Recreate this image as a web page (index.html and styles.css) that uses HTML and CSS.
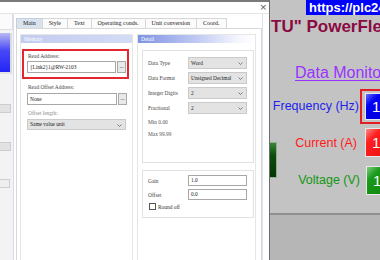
FILE: index.html
```html
<!DOCTYPE html>
<html lang="en">
<head>
  <meta charset="UTF-8">
  <title>Numeric Display Properties</title>
  <link rel="stylesheet" href="styles.css">
</head>
<body>
  <div class="screen">
    <div class="dialog">
      <div class="titlebar"><span class="close">×</span></div>
      <div class="dialog-body">
        <div class="side">
          <div class="side-top"></div>
          <div class="side-preview"></div>
          <div class="side-select"></div>
          <div class="side-select second"></div>
          <div class="side-btn"></div>
        </div>

        <div class="main">
          <div class="tabs">
            <div class="tab active">Main</div>
            <div class="tab">Style</div>
            <div class="tab">Text</div>
            <div class="tab">Operating conds.</div>
            <div class="tab">Unit conversion</div>
            <div class="tab">Coord.</div>
          </div>

          <div class="tab-panel">
            <div class="col memory">
              <div class="group-head">Memory</div>
              <div class="highlight">
                <div class="label">Read Address:</div>
                <div class="addr">
                  <div class="input">{Link2}1@RW-2103</div>
                  <div class="dots">...</div>
                </div>
              </div>
              <div class="field">
                <div class="label">Read Offset Address:</div>
                <div class="addr">
                  <div class="input">None</div>
                  <div class="dots">...</div>
                </div>
              </div>
              <div class="field">
                <div class="label muted">Offset length:</div>
                <div class="select wide">Same value unit
                  <svg class="chev" width="5" height="3" viewBox="0 0 5 3"><polyline points="0.5,0.5 2.5,2.5 4.5,0.5" fill="none" stroke="#666" stroke-width="0.8"/></svg>
                </div>
              </div>
            </div>

            <div class="col detail">
              <div class="group-head grad">Detail</div>
              <div class="box">
                <div class="row"><span class="row-label">Data Type</span>
                  <div class="select">Word<svg class="chev" width="5" height="3" viewBox="0 0 5 3"><polyline points="0.5,0.5 2.5,2.5 4.5,0.5" fill="none" stroke="#666" stroke-width="0.8"/></svg></div></div>
                <div class="row"><span class="row-label">Data Format</span>
                  <div class="select">Unsigned Decimal<svg class="chev" width="5" height="3" viewBox="0 0 5 3"><polyline points="0.5,0.5 2.5,2.5 4.5,0.5" fill="none" stroke="#666" stroke-width="0.8"/></svg></div></div>
                <div class="row"><span class="row-label">Integer Digits</span>
                  <div class="select">2<svg class="chev" width="5" height="3" viewBox="0 0 5 3"><polyline points="0.5,0.5 2.5,2.5 4.5,0.5" fill="none" stroke="#666" stroke-width="0.8"/></svg></div></div>
                <div class="row"><span class="row-label">Fractional</span>
                  <div class="select">2<svg class="chev" width="5" height="3" viewBox="0 0 5 3"><polyline points="0.5,0.5 2.5,2.5 4.5,0.5" fill="none" stroke="#666" stroke-width="0.8"/></svg></div></div>
                <div class="note first">Min 0.00</div>
                <div class="note">Max 99.99</div>
              </div>
              <div class="box second">
                <div class="row"><span class="row-label">Gain</span><div class="input short">1.0</div></div>
                <div class="row"><span class="row-label">Offset</span><div class="input short">0.0</div></div>
                <div class="check"><span class="box-tick"></span>Round off</div>
              </div>
            </div>
          </div>
        </div>
      </div>
    </div>

    <div class="hmi">
      <div class="green-block"></div>
      <div class="url">https://plc247.com/</div>
      <div class="hmi-title">TU" PowerFlex 525</div>
      <div class="hmi-link">Data Monitoring</div>
      <div class="hmi-row freq">
        <span class="hmi-label">Frequency (Hz)</span>
        <span class="selected"><span class="val blue">1</span></span>
      </div>
      <div class="hmi-row cur">
        <span class="hmi-label">Current (A)</span>
        <span class="val red">1</span>
      </div>
      <div class="hmi-row volt">
        <span class="hmi-label">Voltage (V)</span>
        <span class="val green">1</span>
      </div>
      <div class="floor"></div>
    </div>
  </div>
</body>
</html>
```

FILE: styles.css
```css
* {
  box-sizing: border-box;
  margin: 0;
  padding: 0;
}

html, body {
  width: 380px;
  height: 260px;
  overflow: hidden;
}

body {
  font-family: 'Liberation Serif', serif;
  background: #c4c4c4;
  color: #333;
}

.screen {
  display: flex;
  height: 260px;
}

/* dialog */

.dialog {
  width: 270px;
  flex: none;
  display: flex;
  flex-direction: column;
  background: #fff;
  border-top: 2px solid #7a7a7a;
  border-right: 1px solid #6c6c6c;
}

.titlebar {
  height: 12px;
  display: flex;
  justify-content: flex-end;
  align-items: center;
  padding-right: 2px;
  border-bottom: 1px solid #e4e4e4;
}

.close {
  font: 9px 'DejaVu Sans', sans-serif;
  color: #555;
  line-height: 1;
}

.dialog-body {
  flex: 1;
  display: flex;
}

.side {
  width: 14px;
  flex: none;
  background: #f3f3f3;
  border-right: 1px solid #d3deea;
  display: flex;
  flex-direction: column;
}

.side-top {
  height: 16px;
  flex: none;
  background: #fbfbfb;
  border-right: 1px solid #dedede;
  border-bottom: 1px solid #dedede;
}

.side-preview {
  margin-top: 3px;
  height: 41px;
  width: 12px;
  flex: none;
  border-right: 2px solid #dcdcdc;
  border-bottom: 2px solid #e4e4e4;
  background: linear-gradient(#b9b9f4, #4848f6 45%, #2424f8);
}

.side-select {
  margin-top: 30px;
  height: 9px;
  width: 11px;
  flex: none;
  background: #e2e2e2;
  border: 1px solid #cdcdcd;
  border-left: none;
}

.side-select.second {
  margin-top: 29px;
}

.side-btn {
  margin-top: 28px;
  height: 9px;
  width: 10px;
  flex: none;
  background: #eeeeee;
  border: 1px solid #cfcfcf;
  border-left: none;
}

.main {
  flex: 1;
  margin-left: 2px;
  margin-right: 6px;
  padding-top: 4px;
  display: flex;
  flex-direction: column;
  border-right: 1px solid #dbe4ee;
}

.tabs {
  display: flex;
  height: 10px;
  font-size: 6px;
  color: #222;
}

.tab {
  padding: 0 6px;
  line-height: 9px;
  border: 1px solid #d6d6d6;
  border-bottom: none;
  margin-right: -1px;
  background: #fbfbfb;
}

.tab.active {
  background: #d9e3ee;
  border-color: #c4cfdc;
}

.tab-panel {
  flex: 1;
  display: flex;
  gap: 4px;
  padding: 5px 5px 0 3px;
  border: 1px solid #d8d8d8;
  border-bottom: none;
  font-size: 5.4px;
}

.col {
  display: flex;
  flex-direction: column;
  border: 1px solid #e6e6e6;
  border-bottom: none;
}

.memory {
  width: 113px;
}

.detail {
  flex: 1;
}

.group-head {
  height: 8px;
  line-height: 8px;
  padding-left: 3px;
  color: #fff;
  background: linear-gradient(90deg, #c3ccf0, #d4dbf5);
}

.group-head.grad {
  background: linear-gradient(90deg, #7e93e4, #b8c4f1 45%, #f4f6fd 85%, #fff);
}

.label {
  line-height: 7px;
  padding-left: 1px;
  color: #444;
}

.label.muted {
  color: #8c8c8c;
}

.highlight {
  margin: 6px 3px 0 1px;
  padding: 2px 1px 4px 3px;
  border: 2px solid #e42630;
}

.highlight .label {
  margin-bottom: 1px;
}

.field {
  margin: 5px 5px 0 6px;
}

.field .label {
  margin-bottom: 2px;
}

.addr {
  display: flex;
  height: 12px;
}

.input {
  flex: 1;
  height: 12px;
  line-height: 10px;
  padding-left: 2px;
  border: 1px solid #a7a7a7;
  background: #fff;
  color: #222;
}

.dots {
  width: 9px;
  margin-left: 1px;
  text-align: center;
  line-height: 9px;
  background: #e9e9e9;
  border: 1px solid #a9a9a9;
  color: #333;
}

.select {
  position: relative;
  height: 12px;
  line-height: 10px;
  padding-left: 2px;
  background: #e3e3e3;
  border: 1px solid #cacaca;
  color: #222;
  width: 59px;
}

.select.wide {
  width: 99px;
  height: 11px;
  line-height: 9px;
}

.chev {
  position: absolute;
  right: 3px;
  top: 4px;
}

.box {
  margin: 7px 1px 0 4px;
  padding: 6px 5px 0 5px;
  height: 113px;
  border: 1px solid #e2e2e2;
}

.box.second {
  height: 48px;
  padding-top: 4px;
}

.row {
  display: flex;
  align-items: center;
  margin-bottom: 3px;
}

.row-label {
  width: 40px;
  color: #444;
}

.input.short {
  flex: none;
  width: 59px;
  height: 11px;
  line-height: 9px;
}

.note {
  line-height: 12px;
  color: #555;
}

.note.first {
  margin-top: -1px;
}

.check {
  display: flex;
  align-items: center;
  gap: 2px;
  margin-top: 3px;
  padding-left: 1px;
  color: #333;
}

.box-tick {
  width: 7px;
  height: 7px;
  border: 1px solid #555;
  background: #fff;
}

/* HMI screen */

.hmi {
  flex: 1;
  position: relative;
  overflow: hidden;
  display: flex;
  flex-direction: column;
  background: #c3c3c3;
  font-family: 'Liberation Sans', sans-serif;
  white-space: nowrap;
}

.green-block {
  position: absolute;
  left: -2px;
  top: 142px;
  width: 9px;
  height: 36px;
  border: 1px solid #93ad93;
  background: linear-gradient(#3a863a, #0d4d0d 35%, #053605);
}

.url {
  margin-left: 36px;
  width: max-content;
  height: 15px;
  line-height: 15px;
  padding: 0 3px;
  background: #0000ff;
  color: #fff;
  font-weight: bold;
  font-size: 13px;
}

.hmi-title {
  margin-top: 2px;
  margin-left: 1px;
  line-height: 19px;
  font-size: 17px;
  font-weight: bold;
  color: #8a0a42;
}

.hmi-link {
  margin-top: 27px;
  margin-left: 25px;
  line-height: 19px;
  font-size: 16px;
  color: #9933ff;
  text-decoration: underline;
  text-underline-offset: 2px;
}

.hmi-row {
  display: flex;
  align-items: center;
  font-size: 12.5px;
}

.hmi-label {
  flex: none;
  text-align: right;
}

.freq {
  margin-top: 6px;
  height: 36px;
  color: #1f1fee;
}

.freq .hmi-label {
  width: 89px;
}

.selected {
  flex: none;
  width: 26px;
  height: 35px;
  margin-left: 1px;
  padding: 2px 0 2px 3px;
  border: 2px solid #e41c24;
  border-right: none;
}

.val {
  display: block;
  flex: none;
  width: 24px;
  height: 29px;
  line-height: 27px;
  padding-left: 6px;
  font-size: 15px;
  color: #fff;
  border: 1px solid #e8e8e8;
}

.val.blue {
  height: 27px;
  line-height: 25px;
  background: linear-gradient(135deg, #6a6aff, #0000f4 30%, #0000d8);
}

.cur {
  margin-top: 3px;
  height: 31px;
  color: #ff1a1a;
}

.cur .hmi-label {
  width: 87px;
  margin-right: 8px;
}

.val.red {
  background: linear-gradient(135deg, #ff8a8a, #ff2020 30%, #e81010);
}

.volt {
  margin-top: 6px;
  height: 32px;
  color: #129612;
}

.volt .hmi-label {
  width: 90px;
  margin-right: 6px;
}

.val.green {
  background: linear-gradient(135deg, #7fd07f, #1a9a1a 30%, #0e860e);
}

.floor {
  margin-top: 17px;
  flex: 1;
  background: #b6b6b6;
  border-top: 2px solid #909090;
}
```
